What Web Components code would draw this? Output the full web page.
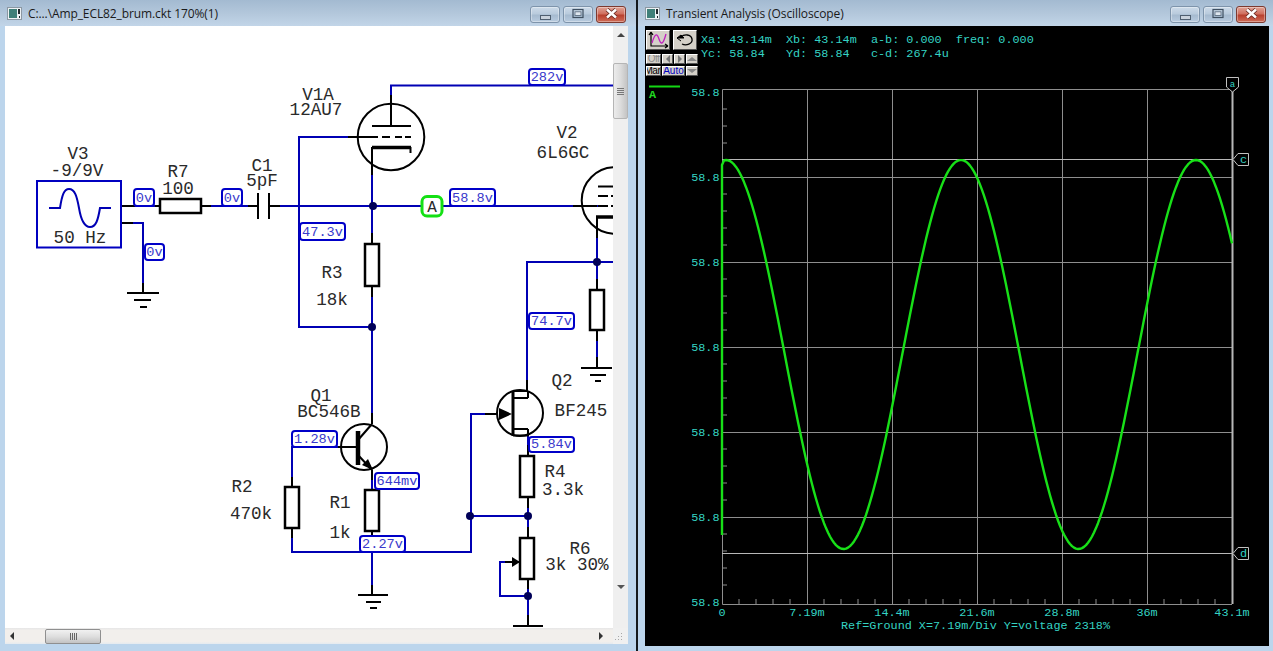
<!DOCTYPE html>
<html>
<head>
<meta charset="utf-8">
<title>Amp_ECL82_brum</title>
<style>
  html, body { margin: 0; height: 100%; overflow: hidden; background: #14181c; }
  body { display: flex; gap: 2px; width: 1273px; height: 651px; }
</style>
</head>
<body>
<win-frame style="width:636px" caption="C:...\Amp_ECL82_brum.ckt 170%(1)" pad="0 8px 7px 5px" btnright="1">
  <scroll-pane><schematic-view></schematic-view></scroll-pane>
</win-frame>
<win-frame style="width:635px" caption="Transient Analysis (Oscilloscope)" pad="0 4px 5px 7px" btnright="-2">
  <scope-view></scope-view>
</win-frame>

<script>
class WinFrame extends HTMLElement {
  constructor() {
    super();
    this.attachShadow({ mode: 'open' });
  }
  connectedCallback() {
    const caption = this.getAttribute('caption') || '';
    const pad = this.getAttribute('pad') || '0';
    const btnright = this.getAttribute('btnright') || '0';
    this.shadowRoot.innerHTML = `
      <style>
        :host { display: flex; flex-direction: column; height: 651px; box-sizing: border-box;
                background: #bcd5ec; flex: none; }
        .bar { height: 26px; flex: none; display: flex; align-items: flex-start;
               background: linear-gradient(180deg, #a3bad1 0%, #b4c8dc 55%, #c2d5e8 100%);
               padding-left: 7px; }
        .ico { margin-top: 7px; flex: none; }
        .cap { margin: 5px 0 0 6px; font: 12px/18px "Open Sans", "Noto Sans", sans-serif; color: #1a1a1a;
               white-space: nowrap; flex: 1; letter-spacing: -0.1px; }
        .btns { margin: 6px ${9 + Number(btnright)}px 0 0; display: flex; gap: 3px; }
        .body { flex: 1; min-height: 0; display: flex; padding: ${pad}; }
        .body ::slotted(*) { flex: 1; min-width: 0; }
      </style>
      <div class="bar">
        <svg class="ico" width="15" height="13" viewBox="0 0 15 13">
          <rect x=".5" y=".5" width="14" height="12" fill="#eef2f5" stroke="#8c98a3"/>
          <rect x="2" y="2" width="8" height="9" fill="#3f7f78"/>
          <rect x="11" y="2" width="2" height="5" fill="#20282c"/>
          <rect x="12" y="9" width="1" height="2" fill="#20282c"/>
        </svg>
        <div class="cap">${caption}</div>
        <div class="btns">
          <cap-btn kind="min"></cap-btn><cap-btn kind="max"></cap-btn><cap-btn kind="close"></cap-btn>
        </div>
      </div>
      <div class="body"><slot></slot></div>`;
  }
}
customElements.define('win-frame', WinFrame);

class CapBtn extends HTMLElement {
  constructor() {
    super();
    this.attachShadow({ mode: 'open' });
  }
  connectedCallback() {
    const kind = this.getAttribute('kind');
    const icons = {
      min: '<rect x="10.5" y="9.5" width="10" height="4" fill="#c9d2dc" stroke="#4f5f70"/>',
      max: '<rect x="10" y="3.5" width="10" height="8" fill="none" stroke="#3f4f60" stroke-width="1.2"/><rect x="12" y="5.8" width="6" height="3.6" fill="#dfe7ef" stroke="#56677a" stroke-width=".8"/>',
      close: '<path d="M11 3.5L20 11.5M20 3.5L11 11.5" stroke="#5a2018" stroke-width="4"/><path d="M11 3.5L20 11.5M20 3.5L11 11.5" stroke="#fff" stroke-width="2.6"/>'
    };
    this.shadowRoot.innerHTML = `
      <style>
        :host { display: block; width: 30px; height: 17px; box-sizing: border-box; border-radius: 3px;
                border: 1px solid ${kind === 'close' ? '#7d3a30' : '#7e94ab'};
                box-shadow: inset 0 0 0 1px rgba(255,255,255,.35);
                background: ${kind === 'close'
                  ? 'linear-gradient(180deg,#e0a497 0%,#d0705f 45%,#b8402e 55%,#cf6d58 100%)'
                  : 'linear-gradient(180deg,#cddbe9 0%,#b9cbdd 45%,#a6bbd0 55%,#b8cbdf 100%)'}; }
        svg { display: block; margin: -1px 0 0 -1px; }
      </style>
      <svg width="30" height="17" viewBox="0 0 30 17">${icons[kind]}</svg>`;
  }
}
customElements.define('cap-btn', CapBtn);

class ScrollPane extends HTMLElement {
  constructor() {
    super();
    this.attachShadow({ mode: 'open' });
    this.shadowRoot.innerHTML = `
      <style>
        :host { display: grid; grid-template-columns: 608px 15px; grid-template-rows: 602px 16px; background: #f0f0f0; }
        .view { overflow: hidden; background: #fff; }
        .v { display: flex; flex-direction: column; align-items: center; background: #efefef; }
        .h { display: flex; align-items: center; background: linear-gradient(180deg,#e6e6e6 0,#f2efec 15%,#f2efec 85%,#e4eaf0 100%); }
        .up { margin-top: 7px; width: 0; height: 0; border: 4px solid transparent; border-top: 0; border-bottom: 4px solid #444; }
        .down { margin-top: 466px; width: 0; height: 0; border: 4px solid transparent; border-bottom: 0; border-top: 4px solid #555; }
        .vthumb { margin-top: 26px; width: 15px; height: 56px; box-sizing: border-box; border: 1px solid #b5b5b5; border-radius: 2px;
                  background: linear-gradient(90deg,#ececec,#dcdcdc 50%,#c4c4c4); display: flex; align-items: center; justify-content: center; }
        .vgrip { width: 7px; height: 7px; background: repeating-linear-gradient(180deg,#777 0 1px,transparent 1px 2px); }
        .left { margin-left: 5px; width: 0; height: 0; border: 4px solid transparent; border-left: 0; border-right: 4px solid #333; }
        .hthumb { margin-left: 31px; width: 56px; height: 15px; box-sizing: border-box; border: 1px solid #8f8f8f; border-radius: 2px;
                  background: linear-gradient(180deg,#f1f1f1,#dedede 50%,#c3c3c3); display: flex; align-items: center; justify-content: center; }
        .hgrip { width: 7px; height: 7px; background: repeating-linear-gradient(90deg,#666 0 1px,transparent 1px 2px); }
        .right { margin-left: 498px; width: 0; height: 0; border: 4px solid transparent; border-right: 0; border-left: 4px solid #333; }
        .corner { background: #f0f0f0; display: flex; align-items: flex-end; justify-content: flex-end; }
        .corner svg { display: block; margin: 0 5px 3px 0; }
      </style>
      <div class="view"><slot></slot></div>
      <div class="v"><div class="up"></div><div class="vthumb"><div class="vgrip"></div></div><div class="down"></div></div>
      <div class="h"><div class="left"></div><div class="hthumb"><div class="hgrip"></div></div><div class="right"></div></div>
      <div class="corner"><svg width="8" height="8" viewBox="0 0 8 8" fill="#a8a8a8"><rect x="6" y="0" width="1" height="1"/><rect x="6" y="3" width="1" height="1"/><rect x="3" y="3" width="1" height="1"/><rect x="6" y="6" width="1" height="1"/><rect x="3" y="6" width="1" height="1"/><rect x="0" y="6" width="1" height="1"/></svg></div>`;
  }
}
customElements.define('scroll-pane', ScrollPane);

class SchematicView extends HTMLElement {
  constructor() {
    super();
    this.attachShadow({ mode: 'open' });
  }
  connectedCallback() {
    const blue = [
      'M122 206H160', 'M122 223H143V293', 'M201 206H258', 'M269 206H600',
      'M391 126V85.5H613', 'M358 137H299V327H372', 'M372 147V244', 'M372 286V424',
      'M372 470V490', 'M372 531V595', 'M341 447H292V487', 'M292 528V552H471V414H497',
      'M470 516H528', 'M527 391V262H613', 'M528 435V456', 'M528 497V538', 'M528 579V626',
      'M520 562H500V596H528', 'M597 236V290', 'M597 330V368'
    ];
    const black = [
      'M122 206H135', 'M155 206H160', 'M122 223H133', 'M143 283V293', 'M201 206H211', 'M248 206H258',
      'M269 206H280', 'M573 206H597', 'M391 95V126', 'M348 137H370', 'M372 147V175', 'M372 233V244',
      'M372 286V297', 'M372 413V424', 'M372 470V480', 'M372 531V542', 'M372 585V595', 'M338 447H358',
      'M292 477V487', 'M292 528V538', 'M485 414H497', 'M527 380V391', 'M528 445V456', 'M528 497V508',
      'M528 527V538', 'M528 579V589', 'M528 615V626', 'M597 217V238', 'M597 279V290', 'M597 330V341',
      'M597 357V368', 'M505 562H520',
      // grounds
      'M127 293H159', 'M134 300H151', 'M140 307H147',
      'M358 595H388', 'M366 602H381', 'M370 608H377',
      'M581 368H612', 'M590 375H606', 'M595 381H601',
      'M513 626H543',
      // caps
      'M258 193V219', 'M269 193V219',
      // tube V1A
      'M372 126H411', 'M370 137H378M382 137H390M395 137H402M405 137H411',
      // tube V2
      'M598 186.5H613', 'M598 196H608M611 196H613', 'M598 206H608M611 206H613',
      // Q1
      'M358 440L372 424', 'M358 455L372 470',
      // Q2
      'M513 391H528M513 398H528M513 429H528M513 435.5H528', 'M528 391V398M528 429V436'
    ];
    const rects = [[160, 199, 41, 14], [365, 244, 14, 42], [365, 490, 14, 41], [285, 487, 14, 41],
                   [520, 456, 14, 41], [520, 538, 14, 41], [590, 290, 14, 40]];
    const tags = [
      [134, 189, 20, 17, '0v'], [145, 244, 19, 16, '0v'], [222, 189, 20, 17, '0v'],
      [529, 69, 36, 16, '282v'], [450, 189, 45, 17, '58.8v'], [300, 223, 45, 17, '47.3v'],
      [529, 313, 45, 16, '74.7v'], [292, 431, 45, 16, '1.28v'], [375, 473, 44, 16, '644mv'],
      [360, 536, 45, 16, '2.27v'], [529, 437, 45, 15, '5.84v']
    ];
    const dots = [[373, 206], [372, 327], [470, 516], [528, 516], [528, 596], [597, 262]];
    const names = [
      [78, 159, 'V3'], [77, 176, '-9/9V'], [80, 243, '50 Hz'], [178, 177, 'R7'], [178, 194, '100'],
      [262, 171, 'C1'], [262, 186, '5pF'], [318, 100, 'V1A'], [316, 115, '12AU7'],
      [567, 138, 'V2'], [563, 158, '6L6GC'], [332, 278, 'R3'], [332, 305, '18k'],
      [321, 401, 'Q1'], [329, 417, 'BC546B'], [242, 492, 'R2'], [251, 519, '470k'],
      [340, 508, 'R1'], [340, 538, '1k'], [562, 386, 'Q2'], [581, 416, 'BF245'],
      [555, 477, 'R4'], [563, 495, '3.3k'], [580, 554, 'R6'], [577, 570, '3k 30%']
    ];
    this.shadowRoot.innerHTML = `
      <style>
        :host { display: block; width: 608px; height: 602px; }
        svg { display: block; }
        .w { fill: none; stroke: #0000b4; stroke-width: 2; }
        .k { fill: none; stroke: #000; stroke-width: 2; }
        .b { fill: #fff; stroke: #000; stroke-width: 2.5; }
        .n { font: 17.6px "Liberation Mono", monospace; fill: #2a2a2a; text-anchor: middle; }
        .t { fill: #fff; stroke: #0000c8; stroke-width: 2; }
        .tx { font: 13.6px "Liberation Mono", monospace; fill: #3a3acc; text-anchor: middle; }
      </style>
      <svg width="608" height="602" viewBox="5 26 608 602">
        ${blue.map(d => `<path class="w" d="${d}"/>`).join('')}
        ${black.map(d => `<path class="k" d="${d}"/>`).join('')}
        ${rects.map(r => `<rect class="b" x="${r[0]}" y="${r[1]}" width="${r[2]}" height="${r[3]}"/>`).join('')}

        <rect x="37" y="181" width="84" height="66.5" fill="none" stroke="#0000c0" stroke-width="2"/>
        <path class="w" d="M49 208H60C62 195 64 189 69 189C75 189 77 197 79 208C81 220 84 227 90 227C96 227 98 220 100 208H111"/>

        <circle cx="391" cy="137" r="33.3" fill="none" stroke="#000" stroke-width="2"/>
        <path class="k" style="stroke-width:3.5" d="M372 147.5H411"/>
        <path class="k" d="M410.5 147V153"/>

        <circle cx="615" cy="200.5" r="33.3" fill="none" stroke="#000" stroke-width="2"/>
        <path class="k" style="stroke-width:3.5" d="M596 217H613"/>

        <circle cx="364" cy="447" r="23" fill="none" stroke="#000" stroke-width="2"/>
        <path class="k" style="stroke-width:4.5" d="M358 431V465"/>
        <polygon points="373,470 362,465 368,459"/>

        <circle cx="520" cy="413" r="23" fill="none" stroke="#000" stroke-width="2"/>
        <path class="k" style="stroke-width:3" d="M513 391V436"/>
        <polygon points="512,414 499,408 499,420"/>
        <polygon points="520,562 512,557 512,567"/>

        ${dots.map(p => `<circle cx="${p[0]}" cy="${p[1]}" r="4" fill="#000058"/>`).join('')}
        ${tags.map(t => `<rect class="t" x="${t[0]}" y="${t[1]}" width="${t[2]}" height="${t[3]}" rx="3"/><text class="tx" x="${t[0] + t[2] / 2}" y="${t[1] + t[3] - 4}">${t[4]}</text>`).join('')}
        ${names.map(n => `<text class="n" x="${n[0]}" y="${n[1]}">${n[2]}</text>`).join('')}

        <rect x="422" y="196.5" width="20" height="19.5" rx="5" fill="#fff" stroke="#14e014" stroke-width="3"/>
        <text class="n" style="font-size:16px" x="432" y="211.5">A</text>
      </svg>`;
  }
}
customElements.define('schematic-view', SchematicView);

class ScopeToolbar extends HTMLElement {
  constructor() {
    super();
    this.attachShadow({ mode: 'open' });
    this.shadowRoot.innerHTML = `
      <style>
        :host { display: grid; grid-template-columns: repeat(4, auto); width: 52px; gap: 1px; font: 10px/10px "Liberation Sans", sans-serif; }
        .big, .s { background: #d4d0c8; border: 1px solid; border-color: #fff #555 #555 #fff; box-sizing: border-box;
                   display: flex; align-items: center; justify-content: center; overflow: hidden; }
        .big { height: 20px; width: 24px; }
        .s { height: 10px; color: #000; font-size: 10px; letter-spacing: -.5px; }
        .wide { grid-column: span 2; }
        .row { grid-column: 1 / -1; display: flex; gap: 1px; }
        .top { margin-bottom: 3px; gap: 3px; }
        .off { width: 15px; color: #8a8a8a; }
        .a { width: 11px; }
        .man { width: 15px; }
        .auto { width: 23px; color: #0000c0; letter-spacing: 0; }
        .tri { width: 0; height: 0; border: 4px solid transparent; }
        svg { display: block; }
      </style>
      <div class="row top">
        <div class="big"><svg width="22" height="18" viewBox="0 0 22 18">
          <path d="M4 1V15H21M4 1L2 4M4 1L6 4M21 15L18 13M21 15L18 17" fill="none" stroke="#000" stroke-width="1.2"/>
          <path d="M5 12C8 2 10 2 12 8S16 14 19 3" fill="none" stroke="#c020c0" stroke-width="1.3"/>
        </svg></div>
        <div class="big"><svg width="22" height="18" viewBox="0 0 22 18">
          <path d="M7 6C10 3 17 3 18 8C19 13 12 15 8 13" fill="none" stroke="#000" stroke-width="1.3"/>
          <path d="M3 7H10L7 4Z M3 7L7 10" stroke="#000" fill="#000"/>
        </svg></div>
      </div>
      <div class="row">
        <div class="s off">Off</div>
        <div class="s a"><span class="tri" style="border-left:0;border-right-color:#777"></span></div>
        <div class="s a"><span class="tri" style="border-right:0;border-left-color:#777"></span></div>
        <div class="s" style="width:12px"><span class="tri" style="border-top:0;border-bottom-color:#888;border-left-width:5px;border-right-width:5px"></span></div>
      </div>
      <div class="row">
        <div class="s man">Man</div>
        <div class="s auto">Auto</div>
        <div class="s" style="width:12px"><span class="tri" style="border-bottom:0;border-top-color:#888;border-left-width:5px;border-right-width:5px"></span></div>
      </div>`;
  }
}
customElements.define('scope-toolbar', ScopeToolbar);

class ScopeView extends HTMLElement {
  constructor() {
    super();
    this.attachShadow({ mode: 'open' });
  }
  connectedCallback() {
    const xs = [807, 892, 977, 1062, 1147];
    const ys = [177, 262, 347, 432, 517];
    let ticks = '';
    for (let x = 722 + 17; x < 1232; x += 17) {
      if ((x - 722) % 85) ticks += `M${x} 604V599`;
    }
    for (let y = 109; y < 604; y += 17) {
      if ((y - 92) % 85) ticks += `M722 ${y}H727`;
    }
    // the trace: one sine, peaks at 726 / 960 / 1196
    let trace = 'M722 535V165L724 160.5';
    for (let x = 726; x <= 1232; x += 2) {
      const y = 354.5 - 194.5 * Math.cos(2 * Math.PI * (x - 726) / 235);
      trace += `L${x} ${y.toFixed(1)}`;
    }
    const ylabels = [96, 181, 266, 351, 436, 521, 606];
    const xlabels = [[722, '0'], [807, '7.19m'], [892, '14.4m'], [977, '21.6m'], [1062, '28.8m'], [1147, '36m'], [1232, '43.1m']];
    this.shadowRoot.innerHTML = `
      <style>
        :host { display: block; background: #000; color: #35d4c4; }
        .head { height: 46px; padding: 4px 0 0 1px; display: flex; gap: 3px; }
        pre { margin: 0; padding-top: 3px; font: 11.8px/14px "Liberation Mono", monospace; color: #35d4c4; }
        svg { display: block; }
        text { font: 11.8px "Liberation Mono", monospace; fill: #35d4c4; }
        .mid { text-anchor: middle; }
        .end { text-anchor: end; }
        .g { stroke: #8e8e8e; stroke-width: 1; fill: none; }
        .l { stroke: #b8b8b8; stroke-width: 1; fill: none; }
      </style>
      <div class="head">
        <scope-toolbar></scope-toolbar>
        <pre>Xa: 43.14m  Xb: 43.14m  a-b: 0.000  freq: 0.000
Yc: 58.84   Yd: 58.84   c-d: 267.4u</pre>
      </div>
      <svg width="624" height="570" viewBox="645 76 624 570">
        <path d="M649 86.5H680" stroke="#14d814" stroke-width="2"/>
        <text x="649" y="98" style="fill:#20d820;font-weight:bold">A</text>
        <path class="g" d="M722.5 89.5H1232M722.5 89.5V604.5H1232"/>
        <path class="g" d="${xs.map(x => `M${x + .5} 89V604`).join('')}${ys.map(y => `M722 ${y + .5}H1232`).join('')}"/>
        <path class="g" d="${ticks}"/>
        <path class="l" d="M722 159.5H1232M722 553.5H1232"/>
        <path d="M1232.5 88V604" stroke="#b8b8b8" stroke-width="2"/>
        <path d="${trace}" fill="none" stroke="#18e018" stroke-width="2.4" stroke-linejoin="round"/>
        <path d="M1226.5 77.5H1238.5V87L1232.5 92L1226.5 87Z" fill="#000" stroke="#c0c0c0"/>
        <text class="mid" x="1232.5" y="87" style="font-size:9px">a</text>
        <path d="M1233 159.5L1238 153.5H1248.5V165.5H1238Z" fill="#000" stroke="#c0c0c0"/>
        <text class="mid" x="1243.5" y="163">c</text>
        <path d="M1233 553.5L1238 547.5H1248.5V559.5H1238Z" fill="#000" stroke="#c0c0c0"/>
        <text class="mid" x="1243.5" y="557">d</text>
        ${ylabels.map(y => `<text class="end" x="719.5" y="${y}">58.8</text>`).join('')}
        ${xlabels.map(l => `<text class="mid" x="${l[0]}" y="616">${l[1]}</text>`).join('')}
        <text x="841" y="629">Ref=Ground  X=7.19m/Div Y=voltage 2318%</text>
      </svg>`;
  }
}
customElements.define('scope-view', ScopeView);
</script>
</body>
</html>
